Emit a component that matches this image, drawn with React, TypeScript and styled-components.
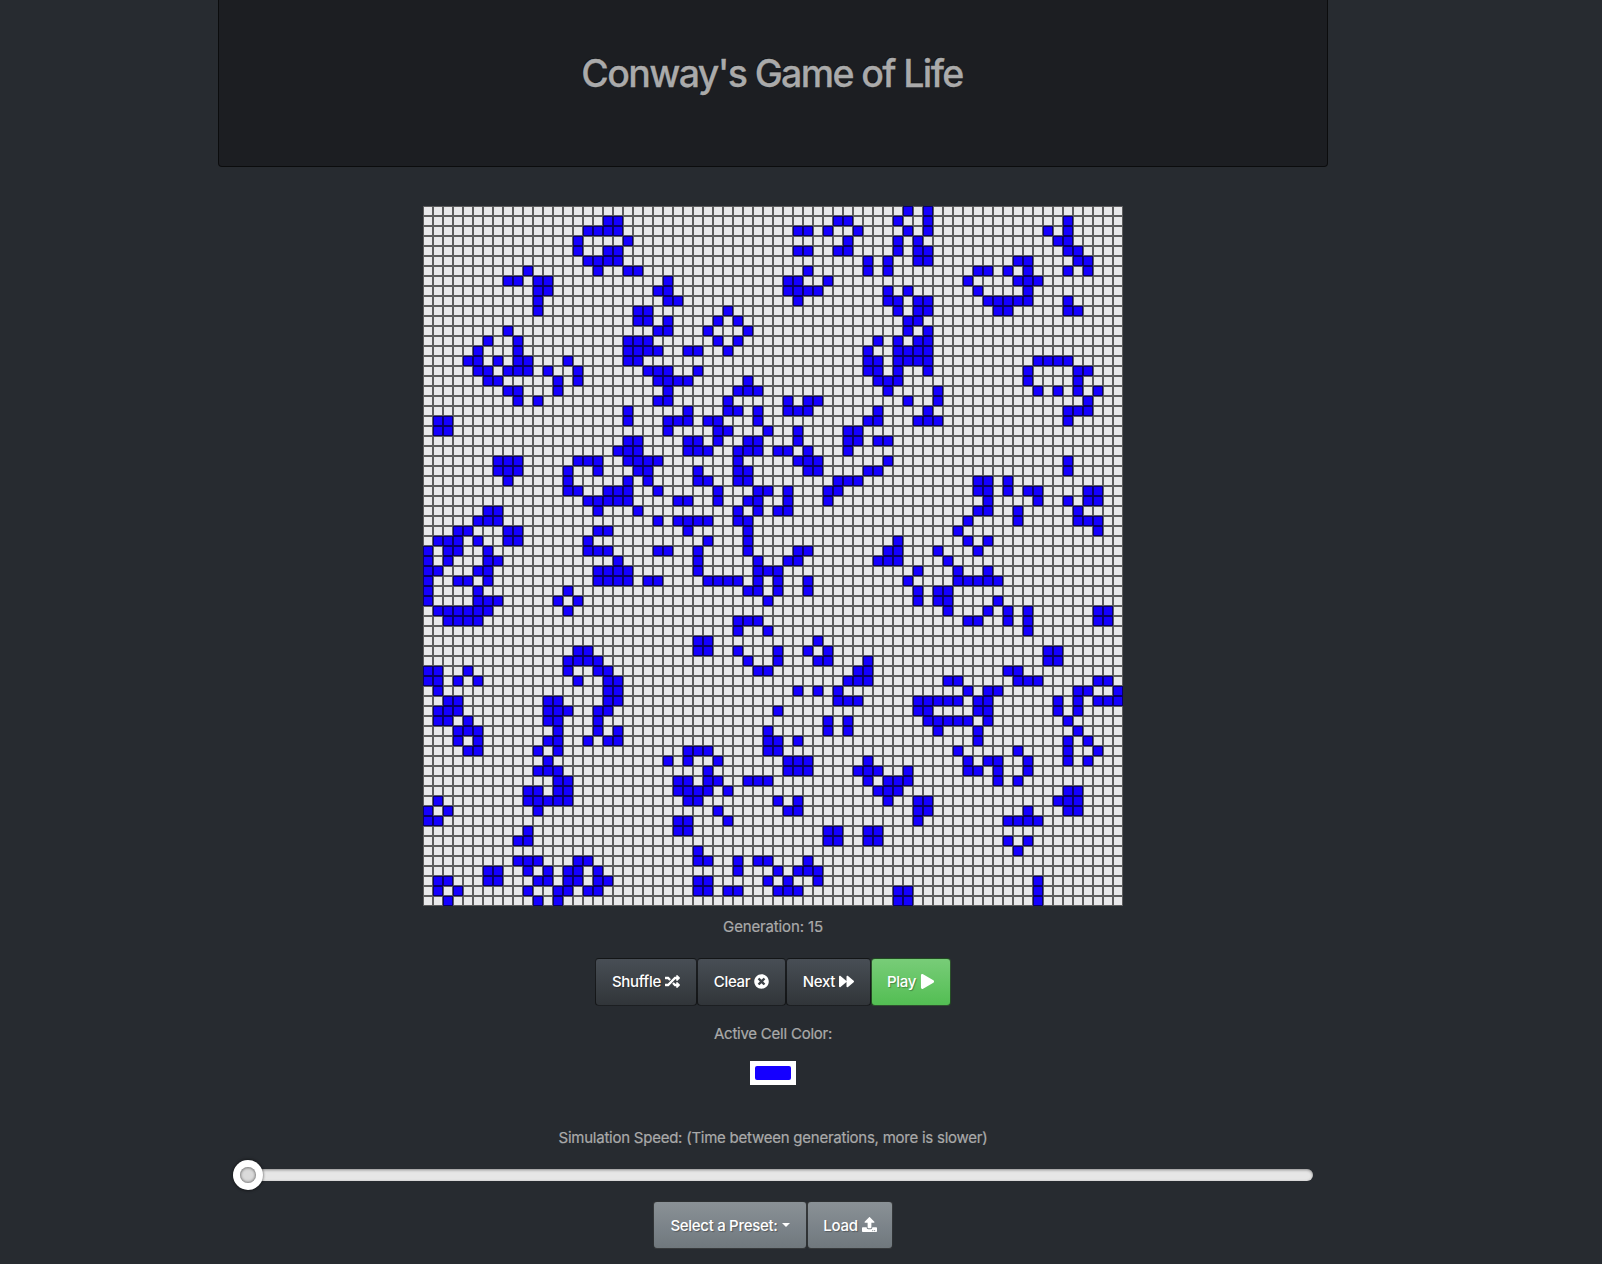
import React, { useMemo, useState } from "react";
import styled, { createGlobalStyle, css } from "styled-components";
import { FaForward, FaPlay, FaRandom, FaTimesCircle, FaUpload } from "react-icons/fa";

const SIZE = 70;

/* Live columns for every row: single columns or inclusive ranges. */
const GENERATION_15 = [
  "48 50",
  "18-19 41-42 47 50 64",
  "16-19 37-38 40 43 48 50 62 64",
  "15 20 42 47 49 63-64",
  "15 18-19 37-38 41-42 47 49-50 64-65",
  "16-19 44 46 49-50 59-60 65-66",
  "10 17 20-21 38 44 46 55-56 58 60 64 66",
  "8-9 11-12 24 36-37 40 54 59-61",
  "11-12 23-24 36-39 46 48 55 60",
  "11 24-25 37 46-47 49-50 56-60 64",
  "11 21-22 30 47 49-50 57-58 64-65",
  "21-22 24 29 31 48-49",
  "8 23-24 28 32 48 50",
  "6 9 20-22 29 31 45 47 49-50",
  "5 9 20-23 26-27 30 44 47-50",
  "4-5 7 9-10 14 20-21 44-45 47-50 61-64",
  "5-6 8-10 12 15 22-24 27 44-45 47 50 60 65-66",
  "6-7 13 15 23-26 32 45-47 60 65",
  "8-9 13 24 31-33 46 51 61 63 65 67",
  "9 11 23-24 30 36 38-39 48 51 66",
  "20 26 30-31 33 36-38 45 50 64-66",
  "1-2 20 24-26 28-29 33 44-45 49-51 64",
  "1-2 24 29-30 34 37 42-43",
  "20-21 26-27 29 32-33 37 42-43 45-46",
  "19-21 26-28 31-33 35-36 38 42",
  "7-9 15-17 20-23 31 37-39 46 64",
  "7-9 14 17 21-22 27 31-32 38-39 44-45 64",
  "8 14 20 22 27-28 31-32 41-43 55-56 58",
  "14-15 18-20 23 29 33-34 36 40-41 55-56 58 60-61 66-67",
  "16-20 25-26 29 32-33 36 40 56 61 64 66-67",
  "6-7 17 21 31 33 35-36 55-56 59 65",
  "5-7 23 25-28 31-32 54 59 65-67",
  "3-4 8-9 17-18 26 32 53 67",
  "1-3 5 8-9 16 28 32 47 54 56",
  "0 2-3 6 16-18 23-24 27 32 37-38 46-47 51 55",
  "0 2 6-7 19 27 33 36-37 45-47 52",
  "0-1 5-6 17-20 27 33-35 49 53 56",
  "0 3-4 6 17-20 22-23 28-31 33 35 38 48 53-57",
  "0 5 14 32-33 35 38 49 51-52",
  "0 5-7 13 15 34 49 51-52 57",
  "1-6 14 52 56 58 60 67-68",
  "2-5 31-33 54-55 58 60 67-68",
  "31 34 60",
  "27-28 39",
  "15-16 27-28 31 35 38 40 62-63",
  "14-17 32 35 39-40 44 62-63",
  "0-1 4 14 17-18 33-34 43-44 58-59",
  "0-1 3 5 15 18-19 42-44 52-53 59-61 67-68",
  "1 18-19 37 39 41 54 56-57 65-66 69",
  "2-3 12-13 18-19 41-43 49-53 55-56 63 65 67-69",
  "1-3 12-14 17-18 35 49-50 55-56 63 65",
  "1-2 4 12-13 17 40 42 50-54 56 64",
  "3-5 13 17 19 34 40 42 51 55 65",
  "3 5 12-13 16 18-19 34-35 37 55 64 66",
  "4-5 11 13 26-28 34-35 53 59 64 67",
  "12 24 26 29 36-38 44 54 56-57 60 64 66",
  "11-13 28 36-38 43-45 48 54-55 57 60",
  "13-14 25-26 28-29 32-34 44 46-48 57 59",
  "10-11 13-14 25-28 30 45-47 64-65",
  "1 10-14 26-27 35 37 46 49-50 63-65",
  "0 2 11 29 36-37 49-50 60 64-65",
  "0-1 25-26 30 49 58-61",
  "10 25-26 40-41 44-45",
  "9-10 40-41 44-45 58 60",
  "27 59",
  "9-11 15-16 27-28 31 33-34 38",
  "6-7 10 12 14-15 17 31 35 37-39",
  "1-2 6-7 11-12 14-15 17-18 27-28 34 36 39 61",
  "1 3 10 13-14 16-17 27-28 30-31 35-37 47-48 61",
  "2 11 13 47-48 61",
];

function parseRow(row: string): boolean[] {
  const cells: boolean[] = new Array(SIZE).fill(false);
  row.split(" ").forEach((part) => {
    const [from, to] = part.split("-").map(Number);
    for (let x = from; x <= (to ?? from); x += 1) cells[x] = true;
  });
  return cells;
}

const GlobalStyle = createGlobalStyle`
  *, *::before, *::after { box-sizing: border-box; }
  body {
    margin: 0;
    background: #272b30;
    color: #aaa;
    font: 400 15px/23px Inter, Roboto, sans-serif;
    overflow: hidden;
  }
`;

const Page = styled.main`
  width: 1546px;
  height: 1264px;
  display: flex;
  flex-direction: column;
  align-items: center;
`;

const Header = styled.header`
  width: 1110px;
  height: 167px;
  padding: 50px 2px 0 0;
  background: #1c1e22;
  border: 1px solid rgba(0, 0, 0, 0.6);
  border-top: 0;
  border-radius: 0 0 4px 4px;
  text-align: center;
`;

const Title = styled.h1`
  margin: 0;
  font-size: 37.5px;
  font-weight: 500;
  line-height: 47px;
  letter-spacing: -1.62px;
  -webkit-text-stroke: 0.3px #aaa;
  text-shadow: -1px -1px 0 rgba(0, 0, 0, 0.3);
`;

const Board = styled.div`
  margin-top: 39px;
  display: grid;
  grid-template-columns: repeat(${SIZE}, 10px);
  grid-auto-rows: 10px;
`;

const Cell = styled.div<{ $alive: boolean }>`
  border: 1px solid rgba(0, 0, 0, 0.6);
  background: ${(p) => (p.$alive ? "#1500ff" : "#e9e9eb")};
`;

const Label = styled.div<{ $top: number; $spacing?: number }>`
  margin-top: ${(p) => p.$top}px;
  height: 23px;
  white-space: nowrap;
  letter-spacing: ${(p) => p.$spacing ?? 0}px;
  -webkit-text-stroke: 0.2px #aaa;
`;

const ButtonRow = styled.div<{ $top: number }>`
  margin-top: ${(p) => p.$top}px;
  display: flex;
`;

const tones = {
  dark: css`
    padding-bottom: 1px;
    background: linear-gradient(#484e55, #3a3f44 60%, #313539);
  `,
  green: css`
    padding-bottom: 1px;
    background: linear-gradient(#78cc78, #62c462 60%, #53be53);
  `,
  gray: css`
    background: linear-gradient(#8a9196, #7a8288 60%, #70787d);

    svg {
      margin-top: -1px;
    }
  `,
};

const Button = styled.button<{ $tone: keyof typeof tones; $width: number }>`
  width: ${(p) => p.$width}px;
  height: 48px;
  padding: 0;
  display: flex;
  align-items: center;
  justify-content: center;
  gap: 4px;
  border: 1px solid rgba(0, 0, 0, 0.6);
  border-radius: 4px;
  color: #fff;
  font: 500 15px/23px Inter, Roboto, sans-serif;
  letter-spacing: -0.3px;
  white-space: nowrap;
  text-shadow: 1px 1px 1px rgba(0, 0, 0, 0.3);

  svg {
    flex: none;
    display: block;
  }

  ${(p) => tones[p.$tone]}
`;

const Caret = styled.span`
  border-top: 4px solid #fff;
  border-left: 4px solid transparent;
  border-right: 4px solid transparent;
`;

const Swatch = styled.div`
  margin-top: 16px;
  padding: 5px;
  background: #fff;
`;

const SwatchColor = styled.div`
  width: 36px;
  height: 14px;
  border-radius: 2px;
  background: #1500ff;
`;

const Slider = styled.div`
  margin-top: 11px;
  width: 1080px;
  height: 30px;
  display: flex;
  align-items: center;
`;

const Track = styled.div`
  flex: 1;
  height: 12px;
  margin-left: -30px;
  border-radius: 6px;
  background: #e6e6e6;
  box-shadow: inset 0 1px 3px rgba(0, 0, 0, 0.4);
`;

const Knob = styled.div`
  z-index: 1;
  flex: none;
  width: 30px;
  height: 30px;
  display: grid;
  place-items: center;
  border-radius: 50%;
  background: #fff;
  box-shadow: 0 1px 3px rgba(0, 0, 0, 0.4), 0 -1px 3px rgba(0, 0, 0, 0.35);
`;

const KnobDimple = styled.div`
  width: 16px;
  height: 16px;
  border-radius: 50%;
  background: #dadada;
  box-shadow: inset 0 1px 3px rgba(0, 0, 0, 0.4), inset 0 -1px 3px rgba(0, 0, 0, 0.35);
`;

export default function App() {
  const [generation] = useState(15);
  const board = useMemo(() => GENERATION_15.map(parseRow), []);

  return (
    <>
      <GlobalStyle />
      <Page>
        <Header>
          <Title>Conway's Game of Life</Title>
        </Header>
        <Board>
          {board.map((row, y) => row.map((alive, x) => <Cell key={`${x}-${y}`} $alive={alive} />))}
        </Board>
        <Label $top={9} $spacing={-0.14}>Generation: {generation}</Label>
        <ButtonRow $top={20}>
          <Button $tone="dark" $width={102}>Shuffle <FaRandom size={15} /></Button>
          <Button $tone="dark" $width={89}>Clear <FaTimesCircle size={15} /></Button>
          <Button $tone="dark" $width={85}>Next <FaForward size={15} /></Button>
          <Button $tone="green" $width={80}>Play <FaPlay size={15} /></Button>
        </ButtonRow>
        <Label $top={16} $spacing={-0.23}>Active Cell Color:</Label>
        <Swatch>
          <SwatchColor />
        </Swatch>
        <Label $top={41} $spacing={-0.24}>
          Simulation Speed: (Time between generations, more is slower)
        </Label>
        <Slider>
          <Knob>
            <KnobDimple />
          </Knob>
          <Track />
        </Slider>
        <ButtonRow $top={11}>
          <Button $tone="gray" $width={154}>Select a Preset: <Caret /></Button>
          <Button $tone="gray" $width={86}>Load <FaUpload size={15} /></Button>
        </ButtonRow>
      </Page>
    </>
  );
}
